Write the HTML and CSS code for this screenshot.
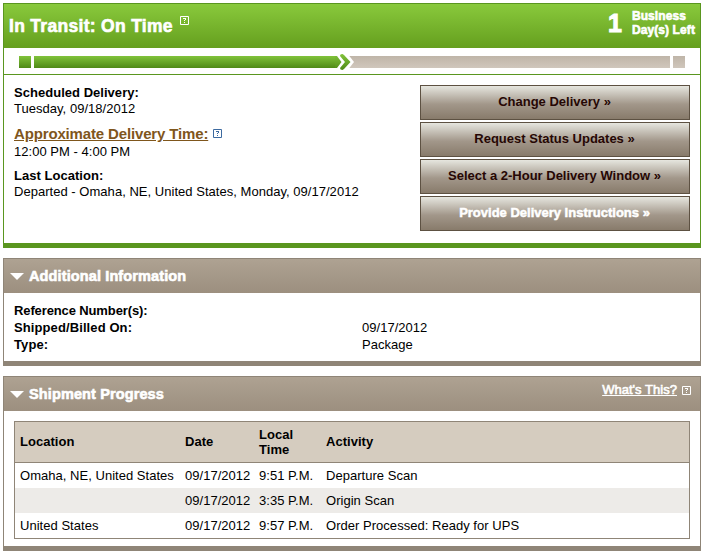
FILE: index.html
```html
<!DOCTYPE html>
<html lang="en">
<head>
    <meta charset="UTF-8">
    <title>Tracking Detail</title>
    <link rel="stylesheet" href="styles.css">
</head>
<body>
    <!-- STATUS -->
    <div class="panel status">
        <div class="status-head">
            <h1>In Transit: On Time</h1>
            <a class="help white" title="Help"><svg width="9" height="9" viewBox="0 0 9 9"><path d="M.5.5h8v8h-8z"/><path class="q" d="M3 2h3v1H3zM5 3h1v1H5zM4 4h1v1H4zM4 6h1v1H4z"/></svg></a>
            <div class="days">
                <span class="num">1</span>
                <span class="days-label">Business<br>Day(s) Left</span>
            </div>
        </div>
        <div class="progress">
            <div class="cap done"></div>
            <div class="bar done"></div>
            <svg class="arrow" width="20" height="18" viewBox="0 0 20 18">
                <defs>
                    <linearGradient id="green" x1="0" y1="0" x2="0" y2="1">
                        <stop offset="0" stop-color="#83c43c"/>
                        <stop offset="1" stop-color="#4f8a17"/>
                    </linearGradient>
                </defs>
                <path fill="#fff" d="M0 2V16V18H12L19 9 12 0H0z"/>
                <path fill="url(#green)" d="M0 3H2L6.500 9 2 15H0zM5 3Q5 .8 7.500 1L9 2 15.500 9 9 16 7.500 17Q5 17 5 15L10 9z"/>
            </svg>
            <div class="bar left"></div>
            <div class="cap left"></div>
        </div>
        <div class="status-body">
            <div class="facts">
                <p><b>Scheduled Delivery:</b><br>Tuesday, 09/18/2012</p>
                <p class="approx"><a class="big-link">Approximate Delivery Time:</a><a class="help blue" title="Help"><svg width="9" height="9" viewBox="0 0 9 9"><path d="M.5.5h8v8h-8z"/><path class="q" d="M3 2h3v1H3zM5 3h1v1H5zM4 4h1v1H4zM4 6h1v1H4z"/></svg></a><br>12:00 PM - 4:00 PM</p>
                <p><b>Last Location:</b><br>Departed - Omaha, NE, United States, Monday, 09/17/2012</p>
            </div>
            <div class="buttons">
                <a class="btn">Change Delivery »</a>
                <a class="btn">Request Status Updates »</a>
                <a class="btn">Select a 2-Hour Delivery Window »</a>
                <a class="btn light">Provide Delivery Instructions »</a>
            </div>
        </div>
    </div>

    <!-- ADDITIONAL INFORMATION -->
    <div class="panel info">
        <div class="panel-head">
            <span class="toggle"></span>
            <h2>Additional Information</h2>
        </div>
        <dl>
            <dt class="tight">Reference Number(s):</dt><dd></dd>
            <dt>Shipped/Billed On:</dt><dd>09/17/2012</dd>
            <dt>Type:</dt><dd>Package</dd>
        </dl>
    </div>

    <!-- SHIPMENT PROGRESS -->
    <div class="panel shipment">
        <div class="panel-head">
            <span class="toggle"></span>
            <h2>Shipment Progress</h2>
            <div class="whats">
                <a class="whats-link">What's This?</a>
                <a class="help white" title="Help"><svg width="9" height="9" viewBox="0 0 9 9"><path d="M.5.5h8v8h-8z"/><path class="q" d="M3 2h3v1H3zM5 3h1v1H5zM4 4h1v1H4zM4 6h1v1H4z"/></svg></a>
            </div>
        </div>
        <table>
            <thead>
                <tr><th class="c1">Location</th><th class="c2">Date</th><th class="c3">Local<br>Time</th><th>Activity</th></tr>
            </thead>
            <tbody>
                <tr><td>Omaha, NE, United States</td><td>09/17/2012</td><td>9:51 P.M.</td><td>Departure Scan</td></tr>
                <tr class="odd"><td></td><td>09/17/2012</td><td>3:35 P.M.</td><td>Origin Scan</td></tr>
                <tr><td>United States</td><td>09/17/2012</td><td>9:57 P.M.</td><td>Order Processed: Ready for UPS</td></tr>
            </tbody>
        </table>
    </div>
</body>
</html>
```
FILE: styles.css
```css
* {
    box-sizing: border-box;
}
body {
    margin: 0;
    padding: 3px 4px 0 3px;
    background: #fff;
    color: #000;
    font-family: "Liberation Sans", Arial, sans-serif;
    font-size: 13px;
    line-height: 16px;
    letter-spacing: 0.03px;
}
h1, h2, p, dl, dd {
    margin: 0;
}
.panel {
    margin-bottom: 10px;
    border: 1px solid #8f8577;
    border-bottom-width: 5px;
}
.help {
    display: inline-block;
    color: #fff;
    line-height: 0;
}
.help svg {
    fill: none;
    stroke: currentColor;
    stroke-width: 1;
}
.help .q {
    fill: currentColor;
    stroke: none;
}
.help.blue {
    color: #3d6aa0;
}
/* Status */
.status {
    height: 245px;
    border-color: #5a961f;
}
.status-head {
    display: flex;
    align-items: flex-start;
    height: 44px;
    padding-left: 5px;
    background: linear-gradient(#89c93c, #659f1e);
    color: #fff;
}
.status-head h1 {
    margin-top: 12px;
    font-size: 17.5px;
    line-height: 20px;
    letter-spacing: 0.3px;
    -webkit-text-stroke: 0.6px #fff;
}
.status-head .help {
    margin: 12px 0 0 7px;
}
.days {
    display: flex;
    margin-left: auto;
    padding-right: 5px;
    font-weight: bold;
    -webkit-text-stroke: 0.6px #fff;
}
.num {
    margin: 6px 10px 0 0;
    font-size: 25px;
    line-height: 26px;
    -webkit-text-stroke: 1px #fff;
}
.days-label {
    padding-top: 5px;
    font-size: 12px;
    line-height: 14px;
    letter-spacing: 0.1px;
}
.progress {
    display: flex;
    align-items: center;
    height: 27px;
    padding: 1px 15px 0;
    border-bottom: 1px solid #5a961f;
}
.cap, .bar {
    height: 12px;
}
.cap {
    width: 12px;
}
.done {
    background: linear-gradient(#81c33b, #4f8a17);
}
.left {
    background: linear-gradient(#bfb5a8, #d0c7bc);
}
.bar.done {
    width: 301px;
    margin-left: 3px;
}
.bar.left {
    flex: 1;
    margin: 0 3px 0 -6px;
}
.arrow {
    position: relative;
    z-index: 1;
}
.status-body {
    display: flex;
    justify-content: space-between;
    padding: 10px 10px 0;
}
.facts p {
    margin-bottom: 8px;
}
.facts .approx {
    line-height: 17px;
}
.big-link {
    color: #7f561c;
    font-size: 15px;
    font-weight: bold;
    letter-spacing: -0.15px;
    text-decoration: underline;
}
.approx .help {
    margin-left: 5px;
    vertical-align: 1px;
}
.buttons {
    display: flex;
    flex-direction: column;
    gap: 2px;
    width: 270px;
}
.btn {
    height: 35px;
    padding-right: 1px;
    border: 1px solid #5d5142;
    background: linear-gradient(#e6e6df, #a2978a 55%, #887b6b);
    color: #260704;
    font-weight: bold;
    line-height: 32px;
    letter-spacing: 0;
    text-align: center;
}
.btn.light {
    color: #fff;
    -webkit-text-stroke: 0.5px #fff;
}
/* Brown panels */
.panel-head {
    display: flex;
    align-items: center;
    height: 34px;
    padding: 0 9px 0 6px;
    background: linear-gradient(#aea292, #9c8f7f);
    color: #fff;
}
.toggle {
    margin-right: 5px;
    border: 7px solid transparent;
    border-top-color: #fff;
    border-bottom: 0;
}
.panel-head h2 {
    font-size: 14.5px;
    line-height: 18px;
    letter-spacing: 0.12px;
    -webkit-text-stroke: 0.6px #fff;
}
.info {
    height: 108px;
}
.info dl {
    display: grid;
    grid-template-columns: 348px auto;
    grid-auto-rows: 17px;
    padding: 9px 10px 0;
    line-height: 17px;
}
dt {
    font-weight: bold;
    letter-spacing: 0.1px;
}
.tight {
    letter-spacing: -0.12px;
}
.shipment {
    height: 175px;
    margin-bottom: 0;
}
.whats {
    display: flex;
    align-items: center;
    gap: 5px;
    margin: 0 0 8px auto;
}
.whats-link {
    text-decoration: underline;
    -webkit-text-stroke: 0.6px #fff;
}
table {
    width: 676px;
    height: 118px;
    margin: 10px 0 0 10px;
    border: 1px solid #8f8577;
    border-spacing: 0;
    table-layout: fixed;
}
th, td {
    padding: 0 0 0 5px;
    text-align: left;
    line-height: 15px;
    white-space: nowrap;
}
th {
    height: 41px;
    padding-bottom: 1px;
    border-bottom: 1px solid #8f8577;
    background: #d5ccbf;
}
td {
    height: 25px;
}
.odd td {
    background: #edebe8;
}
.c1 {
    width: 165px;
}
.c2 {
    width: 74px;
}
.c3 {
    width: 67px;
}
```
